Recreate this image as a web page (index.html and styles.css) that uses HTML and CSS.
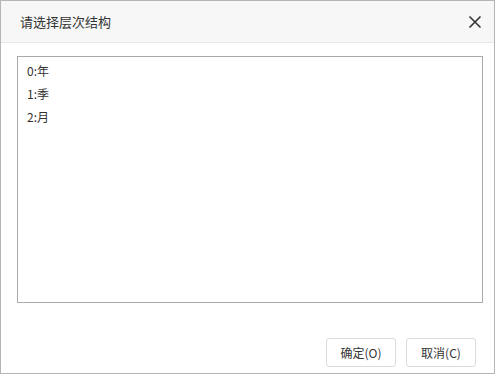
FILE: index.html
```html
<!DOCTYPE html>
<html>

<head>
	<meta charset="UTF-8">
	<title>请选择层次结构</title>
	<link rel="stylesheet" href="styles.css">
</head>

<body>
	<div class="dialog">
		<div class="header">
			<span class="title">请选择层次结构</span>
			<span class="close">
				<svg width="14" height="14" viewBox="0 0 14 14">
					<path d="M1.5 1.5 L12.5 12.5 M12.5 1.5 L1.5 12.5" stroke="#333" stroke-width="1.6" fill="none" />
				</svg>
			</span>
		</div>
		<div class="content">
			<ul class="list">
				<li>0:年</li>
				<li>1:季</li>
				<li>2:月</li>
			</ul>
		</div>
		<div class="footer">
			<button class="btn">确定(O)</button>
			<button class="btn">取消(C)</button>
		</div>
	</div>
</body>

</html>
```
FILE: styles.css
```css
html,
body {
	margin: 0;
	padding: 0;
}

body {
	font-family: "Noto Sans CJK SC", "Noto Sans", sans-serif;
	font-size: 12px;
	color: #333;
	background-color: #fff;
}

.dialog {
	width: 495px;
	height: 374px;
	box-sizing: border-box;
	border: 1px solid #b5b5b5;
	display: flex;
	flex-direction: column;
}

.header {
	height: 41px;
	flex-shrink: 0;
	background-color: #f7f7f7;
	border-bottom: 1px solid #e8e8e8;
	display: flex;
	align-items: center;
	justify-content: space-between;
	padding: 0 12px 0 19px;
}

.title {
	font-size: 13px;
}

.close {
	display: flex;
	cursor: pointer;
}

.content {
	padding: 13px 11px 0 16px;
}

.list {
	list-style: none;
	margin: 0;
	padding: 2px 0 0 9px;
	height: 243px;
	border: 1px solid #aaa;
}

.list li {
	height: 23px;
	line-height: 23px;
	font-size: 12px;
}

.footer {
	flex: 1;
	display: flex;
	justify-content: flex-end;
	align-items: flex-end;
	gap: 10px;
	padding: 0 18px 6px 0;
}

.btn {
	width: 70px;
	height: 29px;
	border: 1px solid #dcdcdc;
	border-radius: 3px;
	background-color: #fff;
	font-family: inherit;
	font-size: 12px;
	color: #333;
	cursor: pointer;
	padding: 0;
}
```
